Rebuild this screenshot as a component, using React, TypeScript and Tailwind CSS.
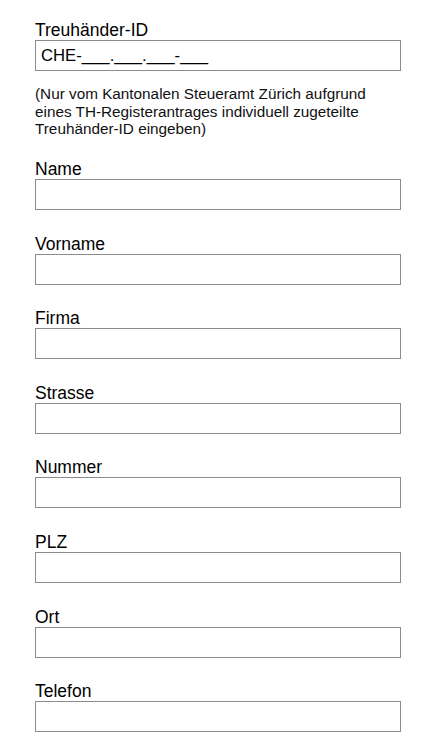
import React from "react";

const fields = ["Name", "Vorname", "Firma", "Strasse", "Nummer", "PLZ", "Ort", "Telefon"];

const Field: React.FC<{ label: string }> = ({ label }) => (
  <div className="mb-[23.57px]">
    <label className="block text-[17.5px] leading-[20px] text-black">{label}</label>
    <input
      type="text"
      className="block w-full h-[31px] border border-[#8c8c8c] bg-white px-[5px] text-[16.7px] text-black outline-none"
    />
  </div>
);

const App: React.FC = () => {
  return (
    <div className="min-h-screen bg-white font-['Liberation_Sans',Arial,sans-serif]">
      <div className="w-[366px] ml-[35px] pt-[20px]">
        {/* Treuhänder-ID */}
        <label className="block text-[17.5px] leading-[20px] text-black">Treuhänder-ID</label>
        <input
          type="text"
          defaultValue="CHE-___.___.___-___"
          className="block w-full h-[31px] border border-[#8c8c8c] bg-white px-[5px] text-[16.7px] text-black outline-none"
        />
        <p className="mt-[14px] text-[15.3px] leading-[17.5px] text-[#111]">
          (Nur vom Kantonalen Steueramt Zürich aufgrund eines TH-Registerantrages individuell zugeteilte Treuhänder-ID eingeben)
        </p>

        {/* Adressfelder */}
        <div className="mt-[21.7px]">
          {fields.map((f) => (
            <Field key={f} label={f} />
          ))}
        </div>
      </div>
    </div>
  );
};

export default App;
